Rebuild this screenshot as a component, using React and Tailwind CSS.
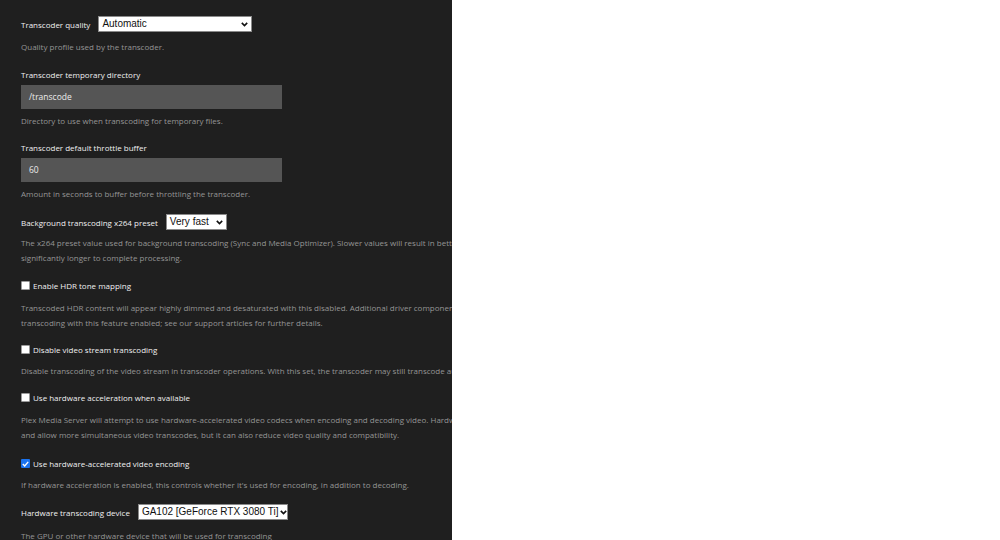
import React from "react";

const font = { fontFamily: '"Open Sans", "Noto Sans", sans-serif' };

function Chevron() {
  return (
    <svg width="7" height="5" viewBox="0 0 7 5" className="shrink-0">
      <path d="M0.8 0.9 L3.5 3.6 L6.2 0.9" fill="none" stroke="#111" strokeWidth="1.6" />
    </svg>
  );
}

function Select({ value, width }) {
  return (
    <div
      className={`flex h-[16px] items-center justify-between gap-[2px] border border-[#8a8a8a] bg-white pl-[3px] pr-[3px] text-[10px] leading-none text-[#111] ${width}`}
      style={{ fontFamily: '"Liberation Sans", "Open Sans", sans-serif' }}
    >
      <span className="whitespace-nowrap">{value}</span>
      <Chevron />
    </div>
  );
}

function Label({ children, className = "" }) {
  return (
    <div className={`whitespace-nowrap text-[8px] leading-[15px] font-medium text-[#f0f0f0] ${className}`}>
      {children}
    </div>
  );
}

function Desc({ children, className = "" }) {
  return (
    <div className={`whitespace-nowrap text-[8px] leading-[15px] text-[#959595] ${className}`}>
      {children}
    </div>
  );
}

function TextInput({ value, className = "" }) {
  return (
    <div className={`flex h-[24px] w-[261px] items-center bg-[#555555] pl-[8px] text-[8.5px] font-medium text-[#ececec] ${className}`}>
      {value}
    </div>
  );
}

function Check({ checked, label, className = "" }) {
  return (
    <div className={`flex h-[15px] items-center gap-[3px] ${className}`}>
      {checked ? (
        <div className="flex h-[9px] w-[9px] items-center justify-center rounded-[1px] bg-[#1a73f0]">
          <svg width="7" height="6" viewBox="0 0 7 6">
            <path d="M0.8 3.1 L2.7 5 L6.2 0.9" fill="none" stroke="#fff" strokeWidth="1.4" />
          </svg>
        </div>
      ) : (
        <div className="h-[9px] w-[9px] rounded-[1px] border border-[#9a9a9a] bg-white" />
      )}
      <span className="whitespace-nowrap text-[8px] font-medium text-[#f0f0f0]">{label}</span>
    </div>
  );
}

export default function App() {
  return (
    <div className="flex h-[540px] w-[1000px] bg-white" style={font}>
      <div className="h-[540px] w-[452px] overflow-hidden bg-[#1f1f1f] pl-[21px] pt-[16px]">
        <div className="flex items-center gap-[8px]">
          <Label>Transcoder quality</Label>
          <Select value="Automatic" width="w-[154px]" />
        </div>
        <Desc className="mt-[7px]">Quality profile used by the transcoder.</Desc>

        <Label className="mt-[13px]">Transcoder temporary directory</Label>
        <TextInput value="/transcode" className="mt-[3px]" />
        <Desc className="mt-[4px]">Directory to use when transcoding for temporary files.</Desc>

        <Label className="mt-[12px]">Transcoder default throttle buffer</Label>
        <TextInput value="60" className="mt-[3px]" />
        <Desc className="mt-[4px]">Amount in seconds to buffer before throttling the transcoder.</Desc>

        <div className="mt-[13px] flex items-center gap-[8px]">
          <Label>Background transcoding x264 preset</Label>
          <Select value="Very fast" width="w-[61px]" />
        </div>
        <Desc className="mt-[5px]">
          The x264 preset value used for background transcoding (Sync and Media Optimizer). Slower values will result in better video quality and smaller file sizes, but can take
          <br />
          significantly longer to complete processing.
        </Desc>

        <Check className="mt-[13px]" label="Enable HDR tone mapping" />
        <Desc className="mt-[7px]">
          Transcoded HDR content will appear highly dimmed and desaturated with this disabled. Additional driver components may be required for hardware-accelerated
          <br />
          transcoding with this feature enabled; see our support articles for further details.
        </Desc>

        <Check className="mt-[12px]" label="Disable video stream transcoding" />
        <Desc className="mt-[6px]">
          Disable transcoding of the video stream in transcoder operations. With this set, the transcoder may still transcode audio and subtitles.
        </Desc>

        <Check className="mt-[12px]" label="Use hardware acceleration when available" />
        <Desc className="mt-[7px]">
          Plex Media Server will attempt to use hardware-accelerated video codecs when encoding and decoding video. Hardware acceleration can make transcoding faster
          <br />
          and allow more simultaneous video transcodes, but it can also reduce video quality and compatibility.
        </Desc>

        <Check className="mt-[14px]" checked label="Use hardware-accelerated video encoding" />
        <Desc className="mt-[6px]">
          If hardware acceleration is enabled, this controls whether it's used for encoding, in addition to decoding.
        </Desc>

        <div className="mt-[12px] flex items-center gap-[8px]">
          <Label>Hardware transcoding device</Label>
          <Select value="GA102 [GeForce RTX 3080 Ti]" width="w-[150px]" />
        </div>
        <Desc className="mt-[8px]">The GPU or other hardware device that will be used for transcoding</Desc>
      </div>
      <div className="flex-1 bg-white" />
    </div>
  );
}
